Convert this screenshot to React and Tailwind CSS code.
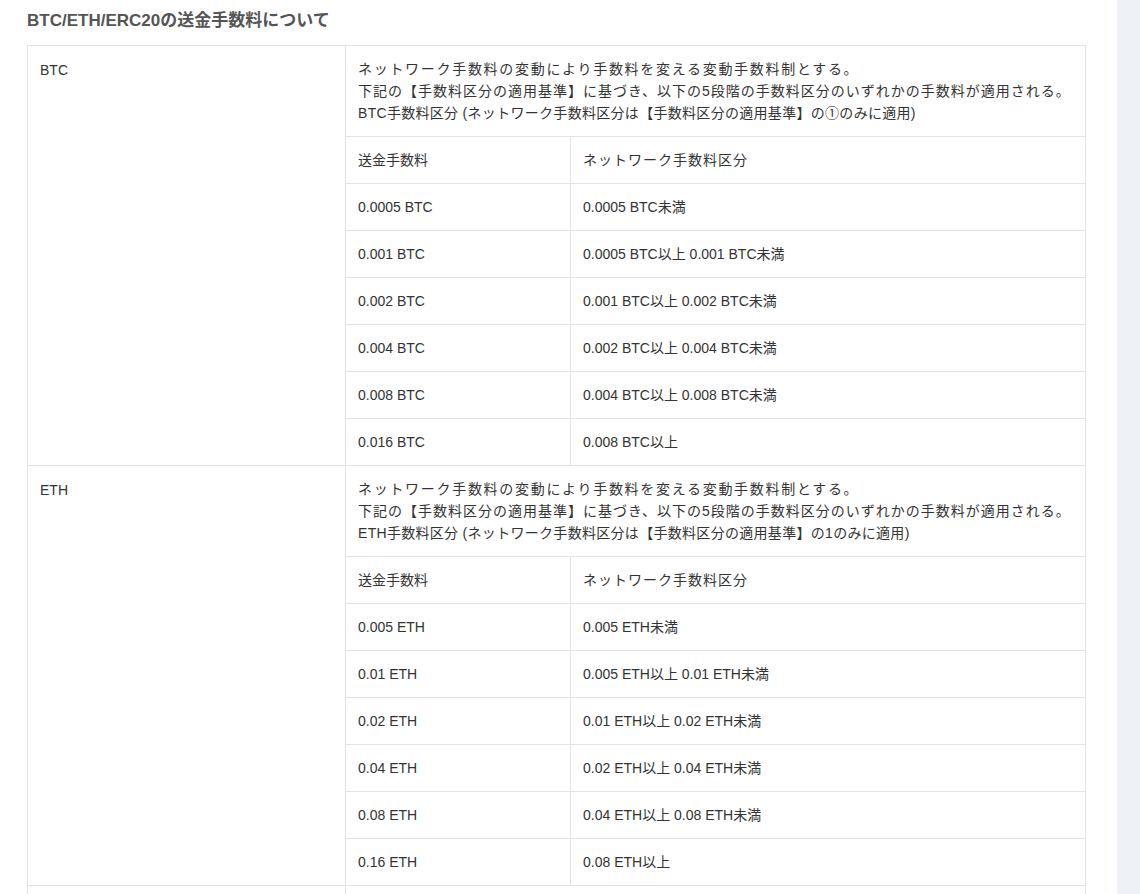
const sections = [
  {
    name: 'BTC',
    note: 'BTC手数料区分 (ネットワーク手数料区分は【手数料区分の適用基準】の①のみに適用)',
    rows: [
      ['0.0005 BTC', '0.0005 BTC未満'],
      ['0.001 BTC', '0.0005 BTC以上 0.001 BTC未満'],
      ['0.002 BTC', '0.001 BTC以上 0.002 BTC未満'],
      ['0.004 BTC', '0.002 BTC以上 0.004 BTC未満'],
      ['0.008 BTC', '0.004 BTC以上 0.008 BTC未満'],
      ['0.016 BTC', '0.008 BTC以上'],
    ],
  },
  {
    name: 'ETH',
    note: 'ETH手数料区分 (ネットワーク手数料区分は【手数料区分の適用基準】の1のみに適用)',
    rows: [
      ['0.005 ETH', '0.005 ETH未満'],
      ['0.01 ETH', '0.005 ETH以上 0.01 ETH未満'],
      ['0.02 ETH', '0.01 ETH以上 0.02 ETH未満'],
      ['0.04 ETH', '0.02 ETH以上 0.04 ETH未満'],
      ['0.08 ETH', '0.04 ETH以上 0.08 ETH未満'],
      ['0.16 ETH', '0.08 ETH以上'],
    ],
  },
];

const Row = ({ a, b }) => (
  <div className="grid grid-cols-[225px_1fr] h-[47px] border-t border-[#e3e3e3]">
    <div className="px-3 flex items-center border-r border-[#e3e3e3]">{a}</div>
    <div className="px-3 flex items-center">{b}</div>
  </div>
);

export default function App() {
  return (
    <div
      className="flex min-h-[894px] bg-white text-[14px] text-[#333] overflow-hidden"
      style={{ fontFamily: '"Liberation Sans", "Noto Sans CJK JP", sans-serif' }}
    >
      <div className="w-[1117px] shrink-0 pl-[27px] pr-[31px]">
        <h2 className="text-[17px] font-bold text-[#555] pt-[10px] pb-[13px] leading-[22px]">
          BTC/ETH/ERC20の送金手数料について
        </h2>
        <div className="border border-[#e3e3e3] border-b-0">
          {sections.map((s, i) => (
            <div key={s.name} className={`grid grid-cols-[318px_1fr] ${i ? 'border-t border-[#e3e3e3]' : ''}`}>
              <div className="px-3 pt-[13px] border-r border-[#e3e3e3] leading-[22px]">{s.name}</div>
              <div>
                <div className="px-3 pt-[12px] pb-[12px] leading-[22px] tracking-[1px]">
                  <p className="tracking-[1.7px]">ネットワーク手数料の変動により手数料を変える変動手数料制とする。</p>
                  <p>下記の【手数料区分の適用基準】に基づき、以下の5段階の手数料区分のいずれかの手数料が適用される。</p>
                  <p className="tracking-[0.3px]">{s.note}</p>
                </div>
                <Row a="送金手数料" b={<span className="tracking-[1px]">ネットワーク手数料区分</span>} />
                {s.rows.map(([a, b]) => (
                  <Row key={a} a={a} b={b} />
                ))}
              </div>
            </div>
          ))}
          <div className="grid grid-cols-[318px_1fr] h-[40px] border-t border-[#e3e3e3]">
            <div className="border-r border-[#e3e3e3]" />
            <div />
          </div>
        </div>
      </div>
      <div className="flex-1 bg-[#eef1f5]" />
    </div>
  );
}
